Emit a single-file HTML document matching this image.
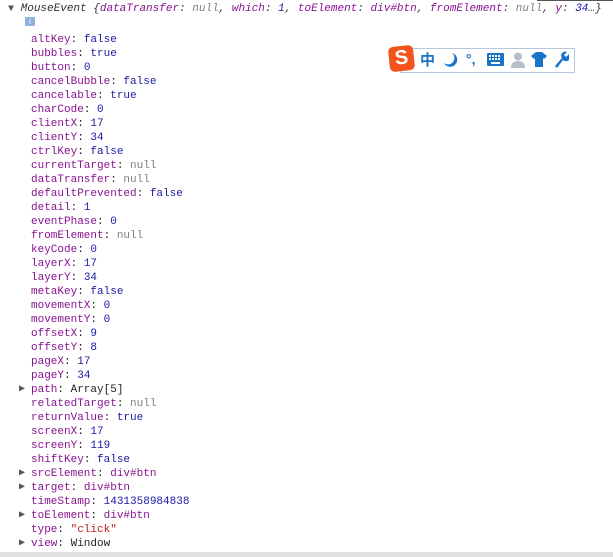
<!DOCTYPE html>
<html><head><meta charset="utf-8"><style>
body{margin:0;width:613px;height:557px;background:#fff;position:relative;overflow:hidden;font-family:"Liberation Mono",monospace;font-size:11px;}
#w{position:absolute;left:0;top:2px;width:613px;height:549px}
.l{position:absolute;left:31px;height:14px;line-height:14px;white-space:pre;color:#222}
.k{color:#881391}.n{color:#1a1aa6}.g{color:#808080}.s{color:#c41a16}.o{color:#222}
.t{position:absolute;left:19px;font-size:10px;color:#555;line-height:14px}
</style></head><body>
<div style="position:absolute;left:537px;top:0;width:76px;height:1px;background:#555"></div>
<div id="w">
<div style="position:absolute;left:8px;top:0px;line-height:14px;white-space:pre;color:#333;font-style:italic"><span style="font-style:normal;font-size:10px;color:#555">▼</span> MouseEvent {<span class="k">dataTransfer</span>: <span class="g">null</span>, <span class="k">which</span>: <span class="n">1</span>, <span class="k">toElement</span>: <span class="k">div#btn</span>, <span class="k">fromElement</span>: <span class="g">null</span>, <span class="k">y</span>: <span class="n">34</span>…}</div>
<div style="position:absolute;left:25px;top:15px;width:10px;height:9px;background:#8fb0e0;border-radius:1px;color:#fff;font-size:8px;line-height:9px;text-align:center;font-family:'Liberation Sans'">i</div>
<div class="l" style="top:31px"><span class="k">altKey</span>: <span class="n">false</span></div>
<div class="l" style="top:45px"><span class="k">bubbles</span>: <span class="n">true</span></div>
<div class="l" style="top:59px"><span class="k">button</span>: <span class="n">0</span></div>
<div class="l" style="top:73px"><span class="k">cancelBubble</span>: <span class="n">false</span></div>
<div class="l" style="top:87px"><span class="k">cancelable</span>: <span class="n">true</span></div>
<div class="l" style="top:101px"><span class="k">charCode</span>: <span class="n">0</span></div>
<div class="l" style="top:115px"><span class="k">clientX</span>: <span class="n">17</span></div>
<div class="l" style="top:129px"><span class="k">clientY</span>: <span class="n">34</span></div>
<div class="l" style="top:143px"><span class="k">ctrlKey</span>: <span class="n">false</span></div>
<div class="l" style="top:157px"><span class="k">currentTarget</span>: <span class="g">null</span></div>
<div class="l" style="top:171px"><span class="k">dataTransfer</span>: <span class="g">null</span></div>
<div class="l" style="top:185px"><span class="k">defaultPrevented</span>: <span class="n">false</span></div>
<div class="l" style="top:199px"><span class="k">detail</span>: <span class="n">1</span></div>
<div class="l" style="top:213px"><span class="k">eventPhase</span>: <span class="n">0</span></div>
<div class="l" style="top:227px"><span class="k">fromElement</span>: <span class="g">null</span></div>
<div class="l" style="top:241px"><span class="k">keyCode</span>: <span class="n">0</span></div>
<div class="l" style="top:255px"><span class="k">layerX</span>: <span class="n">17</span></div>
<div class="l" style="top:269px"><span class="k">layerY</span>: <span class="n">34</span></div>
<div class="l" style="top:283px"><span class="k">metaKey</span>: <span class="n">false</span></div>
<div class="l" style="top:297px"><span class="k">movementX</span>: <span class="n">0</span></div>
<div class="l" style="top:311px"><span class="k">movementY</span>: <span class="n">0</span></div>
<div class="l" style="top:325px"><span class="k">offsetX</span>: <span class="n">9</span></div>
<div class="l" style="top:339px"><span class="k">offsetY</span>: <span class="n">8</span></div>
<div class="l" style="top:353px"><span class="k">pageX</span>: <span class="n">17</span></div>
<div class="l" style="top:367px"><span class="k">pageY</span>: <span class="n">34</span></div>
<div class="t" style="top:381px">▶</div>
<div class="l" style="top:381px"><span class="k">path</span>: <span class="o">Array[5]</span></div>
<div class="l" style="top:395px"><span class="k">relatedTarget</span>: <span class="g">null</span></div>
<div class="l" style="top:409px"><span class="k">returnValue</span>: <span class="n">true</span></div>
<div class="l" style="top:423px"><span class="k">screenX</span>: <span class="n">17</span></div>
<div class="l" style="top:437px"><span class="k">screenY</span>: <span class="n">119</span></div>
<div class="l" style="top:451px"><span class="k">shiftKey</span>: <span class="n">false</span></div>
<div class="t" style="top:465px">▶</div>
<div class="l" style="top:465px"><span class="k">srcElement</span>: <span class="k">div#btn</span></div>
<div class="t" style="top:479px">▶</div>
<div class="l" style="top:479px"><span class="k">target</span>: <span class="k">div#btn</span></div>
<div class="l" style="top:493px"><span class="k">timeStamp</span>: <span class="n">1431358984838</span></div>
<div class="t" style="top:507px">▶</div>
<div class="l" style="top:507px"><span class="k">toElement</span>: <span class="k">div#btn</span></div>
<div class="l" style="top:521px"><span class="k">type</span>: <span class="s">"click"</span></div>
<div class="t" style="top:535px">▶</div>
<div class="l" style="top:535px"><span class="k">view</span>: <span class="o">Window</span></div>
</div>
<div style="position:absolute;left:0;top:552px;width:613px;height:5px;background:#e0e0e0"></div>
<!-- IME toolbar -->
<div style="position:absolute;left:400px;top:48px;width:173px;height:23px;border:1px solid #b7c8dc;background:#fff"></div>
<div style="position:absolute;left:389px;top:46px;width:25px;height:25px;background:#f2541b;border-radius:5px;transform:rotate(-6deg);color:#fff;font:bold 20px/25px 'Liberation Sans',sans-serif;text-align:center">S</div>
<div style="position:absolute;left:420px;top:50px;font:bold 15px/20px 'Noto Sans CJK SC',sans-serif;color:#1a74c7">中</div>
<svg style="position:absolute;left:442px;top:51px" width="16" height="18"><path d="M10 2 A7 7 0 1 1 2 12 A6 6 0 0 0 10 2Z" fill="#1a74c7"/></svg>
<div style="position:absolute;left:466px;top:49px;font:bold 14px/20px 'Liberation Sans';color:#1a74c7">°,</div>
<svg style="position:absolute;left:487px;top:53px" width="17" height="13"><rect width="17" height="13" rx="1" fill="#1a74c7"/><g fill="#fff"><rect x="2" y="2" width="2" height="2"/><rect x="5" y="2" width="2" height="2"/><rect x="8" y="2" width="2" height="2"/><rect x="11" y="2" width="2" height="2"/><rect x="2" y="5" width="2" height="2"/><rect x="5" y="5" width="2" height="2"/><rect x="8" y="5" width="2" height="2"/><rect x="11" y="5" width="2" height="2"/><rect x="4" y="9" width="9" height="2"/></g></svg>
<svg style="position:absolute;left:511px;top:52px" width="14" height="16"><circle cx="7" cy="4.5" r="4" fill="#b5c0cc"/><path d="M0 16 Q0 9 7 9 Q14 9 14 16Z" fill="#b5c0cc"/></svg>
<svg style="position:absolute;left:531px;top:52px" width="16" height="15"><path d="M5 0 L11 0 L16 4 L13 7 L12 6 L12 15 L4 15 L4 6 L3 7 L0 4Z" fill="#1a74c7"/></svg>
<svg style="position:absolute;left:553px;top:51px" width="16" height="17"><path d="M2 15 L9 7 A4 4 0 0 1 14 1 L11 4 L13 6 L16 3 A4 4 0 0 1 10 9 L4 17Z" fill="#1a74c7"/></svg>
</body></html>
